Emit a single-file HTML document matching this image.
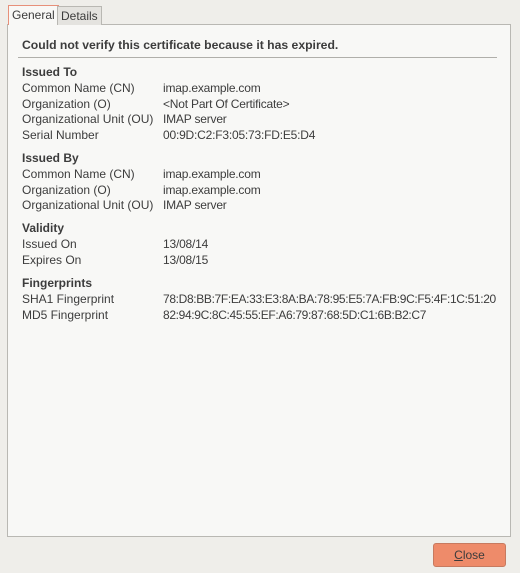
<html><head><style>
body{margin:0;width:520px;height:573px;background:#efeeea;font-family:"Liberation Sans",sans-serif;font-size:12px;color:#3c3c3c;position:relative;overflow:hidden}
.panel{position:absolute;left:7px;top:24px;width:502px;height:511px;background:#f8f8f6;border:1px solid #b9b8b3}
.tab{position:absolute;top:6px;height:18px;font-size:12px;line-height:18px;padding:0 3px;border:1px solid #b9b8b3;border-bottom:none}
.t{position:absolute;white-space:nowrap;line-height:14px}
.l{left:22px}
.b{font-weight:bold}
.v{left:163px;letter-spacing:-0.2px}
.btn{position:absolute;left:433px;top:543px;width:71px;height:22px;background:#ee8b6a;border:1px solid #c77a60;border-radius:3px;text-align:center;line-height:22px;font-size:12px;color:#3c3c3c}
</style></head><body>
<div class="panel"></div>
<div class="tab" style="left:8px;background:#f8f8f6;border-color:#e7907a;top:5px;height:19px">General</div>
<div class="tab" style="left:57px;background:#e4e3df">Details</div>
<div class="t b" style="left:22px;top:38px;font-size:12.2px">Could not verify this certificate because it has expired.</div>
<div style="position:absolute;left:18px;top:57px;width:479px;height:1px;background:#b0afaa"></div>
<div class="t b" style="left:22px;top:65px">Issued To</div>
<div class="t l" style="top:81px">Common Name (CN)</div><div class="t v" style="top:81px">imap.example.com</div>
<div class="t l" style="top:97px">Organization (O)</div><div class="t v" style="top:97px">&lt;Not Part Of Certificate&gt;</div>
<div class="t l" style="top:112px">Organizational Unit (OU)</div><div class="t v" style="top:112px">IMAP server</div>
<div class="t l" style="top:128px">Serial Number</div><div class="t v" style="top:128px">00:9D:C2:F3:05:73:FD:E5:D4</div>
<div class="t b" style="left:22px;top:151px">Issued By</div>
<div class="t l" style="top:167px">Common Name (CN)</div><div class="t v" style="top:167px">imap.example.com</div>
<div class="t l" style="top:183px">Organization (O)</div><div class="t v" style="top:183px">imap.example.com</div>
<div class="t l" style="top:198px">Organizational Unit (OU)</div><div class="t v" style="top:198px">IMAP server</div>
<div class="t b" style="left:22px;top:221px">Validity</div>
<div class="t l" style="top:237px">Issued On</div><div class="t v" style="top:237px">13/08/14</div>
<div class="t l" style="top:253px">Expires On</div><div class="t v" style="top:253px">13/08/15</div>
<div class="t b" style="left:22px;top:276px">Fingerprints</div>
<div class="t l" style="top:292px">SHA1 Fingerprint</div><div class="t v" style="top:292px;letter-spacing:-0.35px">78:D8:BB:7F:EA:33:E3:8A:BA:78:95:E5:7A:FB:9C:F5:4F:1C:51:20</div>
<div class="t l" style="top:308px">MD5 Fingerprint</div><div class="t v" style="top:308px;letter-spacing:-0.35px">82:94:9C:8C:45:55:EF:A6:79:87:68:5D:C1:6B:B2:C7</div>
<div class="btn"><u>C</u>lose</div>
</body></html>
